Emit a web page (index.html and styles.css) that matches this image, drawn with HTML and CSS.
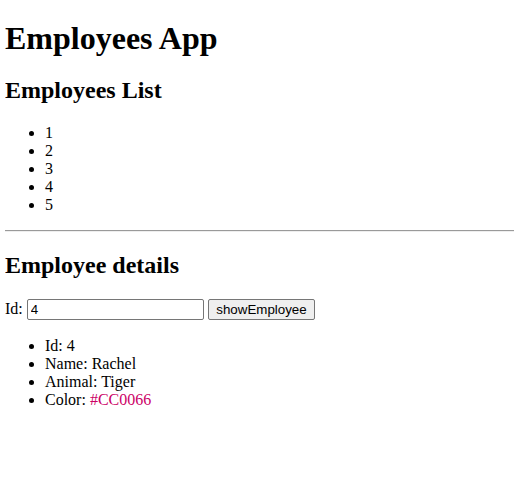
FILE: index.html
```html
<!DOCTYPE html>
<html>
<head>
<meta charset="utf-8">
<title>Employees App</title>
<link rel="stylesheet" href="styles.css">
</head>
<body class="page">
<h1 class="title">Employees App</h1>
<h2 class="section">Employees List</h2>
<ul class="list">
<li>1</li>
<li>2</li>
<li>3</li>
<li>4</li>
<li>5</li>
</ul>
<hr class="rule">
<h2 class="section details">Employee details</h2>
<div class="form">Id: <input class="id-input" type="text" value="4"> <button class="btn">showEmployee</button></div>
<ul class="list info">
<li>Id: 4</li>
<li>Name: Rachel</li>
<li>Animal: Tiger</li>
<li>Color: <span class="color-val">#CC0066</span></li>
</ul>
</body>
</html>
```
FILE: styles.css
```css
html, body {
  background: #fff;
}
.page {
  margin: 0 0 0 5px;
  padding-top: 20px;
  font-family: "Liberation Serif", "Times New Roman", serif;
  font-size: 16px;
  color: #000;
}
.title {
  font-size: 2em;
  margin: 0 0 19.5px;
}
.section {
  font-size: 1.5em;
  margin: 0.83em 0;
}
.details {
  margin-top: 20px;
}
.list {
  margin: 1em 0;
  padding-left: 40px;
}
.info {
  margin-top: 17px;
}
.rule {
  margin: 8px 0;
  border: 0;
  border-top: 1px solid #9a9a9a;
  border-bottom: 1px solid #eee;
  height: 0;
}
.form {
  margin: 0;
}
.id-input {
  font-family: "Liberation Sans", Arial, sans-serif;
  font-size: 13.33px;
  width: 177px;
  height: 21px;
  padding: 1px 3px;
  border: 1px solid #767676;
  border-radius: 2px;
  box-sizing: border-box;
  color: #000;
}
.btn {
  font-family: "Liberation Sans", Arial, sans-serif;
  font-size: 13.33px;
  height: 21px;
  padding: 1px 7.5px;
  border: 1px solid #767676;
  border-radius: 2px;
  background: #efefef;
  color: #000;
  box-sizing: border-box;
}
.color-val {
  color: #cc0066;
}
```
